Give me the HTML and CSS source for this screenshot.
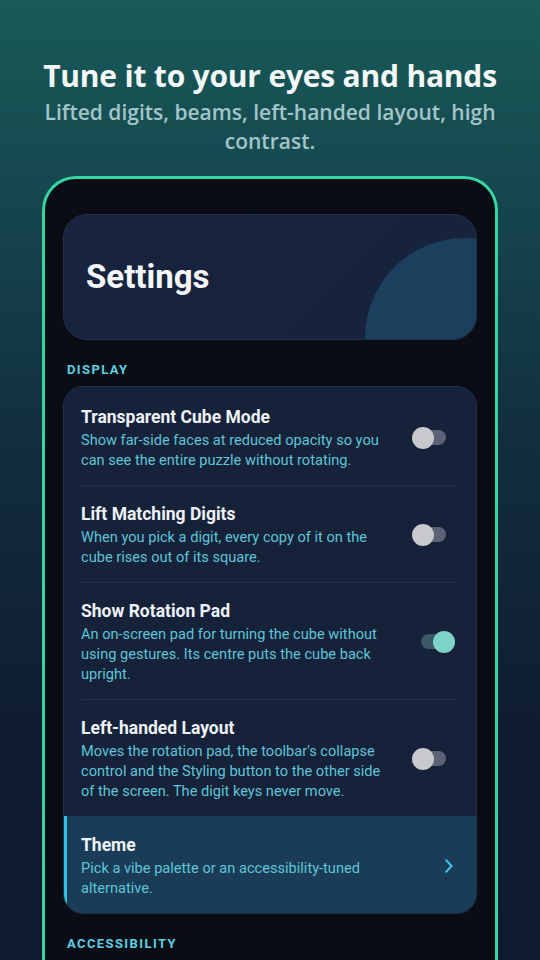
FILE: index.html
```html
<!DOCTYPE html>
<html lang="en">
<head>
<meta charset="utf-8">
<title>Settings</title>
<link rel="stylesheet" href="styles.css">
</head>
<body>
<div class="screen">
  <header class="promo">
    <h1 class="promo-title">Tune it to your eyes and hands</h1>
    <p class="promo-sub">Lifted digits, beams, left-handed layout, high contrast.</p>
  </header>

  <div class="phone">
    <div class="hero">
      <h2 class="hero-title">Settings</h2>
      <span class="hero-blob"></span>
    </div>

    <div class="section-label">DISPLAY</div>

    <div class="list">
      <div class="item">
        <div class="item-text">
          <div class="item-title">Transparent Cube Mode</div>
          <div class="item-desc">Show far-side faces at reduced opacity so you can see the entire puzzle without rotating.</div>
        </div>
        <div class="switch"><span class="track"></span><span class="knob"></span></div>
      </div>
      <div class="divider"></div>
      <div class="item">
        <div class="item-text">
          <div class="item-title">Lift Matching Digits</div>
          <div class="item-desc">When you pick a digit, every copy of it on the cube rises out of its square.</div>
        </div>
        <div class="switch"><span class="track"></span><span class="knob"></span></div>
      </div>
      <div class="divider"></div>
      <div class="item">
        <div class="item-text">
          <div class="item-title">Show Rotation Pad</div>
          <div class="item-desc">An on-screen pad for turning the cube without using gestures. Its centre puts the cube back upright.</div>
        </div>
        <div class="switch on"><span class="track"></span><span class="knob"></span></div>
      </div>
      <div class="divider"></div>
      <div class="item">
        <div class="item-text">
          <div class="item-title">Left-handed Layout</div>
          <div class="item-desc">Moves the rotation pad, the toolbar's collapse control and the Styling button to the other side of the screen. The digit keys never move.</div>
        </div>
        <div class="switch"><span class="track"></span><span class="knob"></span></div>
      </div>
      <div class="item item-theme">
        <div class="item-text">
          <div class="item-title">Theme</div>
          <div class="item-desc">Pick a vibe palette or an accessibility-tuned alternative.</div>
        </div>
        <svg class="chevron" width="8" height="14" viewBox="0 0 8 14"><path d="M1.2 1.2 L6.6 7 L1.2 12.8" fill="none" stroke="#3cc4e6" stroke-width="2" stroke-linecap="round" stroke-linejoin="round"/></svg>
      </div>
    </div>

    <div class="section-label">ACCESSIBILITY</div>
  </div>
</div>
</body>
</html>
```

FILE: styles.css
```css
* { box-sizing: border-box; }

html, body {
  margin: 0;
  padding: 0;
}

body {
  width: 540px;
  height: 960px;
  overflow: hidden;
  background: linear-gradient(180deg, #185b5a 0%, #16494f 18%, #122f3f 45%, #101d31 75%, #101a2e 100%);
  font-family: Roboto, "Liberation Sans", sans-serif;
}

.screen {
  width: 540px;
  height: 960px;
  overflow: hidden;
}

.promo {
  padding-top: 58px;
  text-align: center;
}

.promo-title {
  margin: 0;
  font-family: "Open Sans", "DejaVu Sans", sans-serif;
  font-weight: 700;
  font-size: 30px;
  line-height: 36px;
  letter-spacing: -0.2px;
  color: #f3f7f7;
}

.promo-sub {
  margin: 4px auto 0;
  width: 480px;
  font-family: "Open Sans", "DejaVu Sans", sans-serif;
  font-weight: 600;
  font-size: 21px;
  line-height: 29px;
  color: #a3c5ca;
}

.phone {
  width: 456px;
  height: 820px;
  margin: 20px auto 0;
  border: 3px solid #35d6a4;
  border-bottom: none;
  border-radius: 34px 34px 0 0;
  background: #0a0e14;
  padding: 35px 18px 0;
}

.hero {
  position: relative;
  overflow: hidden;
  height: 126px;
  border: 1px solid #222f4a;
  border-radius: 24px;
  background: linear-gradient(135deg, #18243f 0%, #16233b 100%);
  display: flex;
  align-items: center;
  padding-left: 22px;
}

.hero-title {
  position: relative;
  z-index: 1;
  margin: 0;
  font-family: Roboto, sans-serif;
  font-weight: 700;
  font-size: 33px;
  line-height: 40px;
  color: #f5f7fa;
}

.hero-blob {
  position: absolute;
  left: 301px;
  top: 23px;
  width: 200px;
  height: 200px;
  border-radius: 50%;
  background: #1c3f5e;
}

.section-label {
  margin: 22px 0 8px 4px;
  font-family: Roboto, sans-serif;
  font-weight: 700;
  font-size: 13px;
  line-height: 16px;
  letter-spacing: 1.4px;
  color: #5ccfe4;
}

.list {
  border: 1px solid #202f4a;
  border-radius: 20px;
  background: #15223a;
  overflow: hidden;
  padding-top: 2px;
}

.item {
  display: flex;
  align-items: center;
  padding: 17px 20px 15px 17px;
}

.item-text {
  width: 308px;
}

.item-title {
  font-weight: 700;
  font-size: 17.5px;
  line-height: 22px;
  color: #eef2f6;
}

.item-desc {
  margin-top: 2px;
  font-size: 14.6px;
  line-height: 20px;
  color: #5ec4d6;
}

.divider {
  height: 1px;
  margin: 0 17px 0 17px;
  background: #213049;
}

.switch {
  position: relative;
  margin-left: auto;
  width: 44px;
  height: 22px;
  flex: none;
}

.switch .track {
  position: absolute;
  left: 2px;
  top: 3px;
  width: 32px;
  height: 15px;
  border-radius: 8px;
  background: #5c6377;
}

.switch .knob {
  position: absolute;
  left: 0;
  top: 0;
  width: 22px;
  height: 22px;
  border-radius: 50%;
  background: #c8c9cc;
}

.switch.on .track {
  left: 9px;
  background: #3a5868;
}

.switch.on .knob {
  left: 21px;
  background: #7dd3c7;
}

.item-theme {
  background: #1a3c57;
  border-left: 3px solid #2fc2e2;
  padding: 18px 23px 15px 14px;
}

.chevron {
  margin-left: auto;
  flex: none;
}
```
